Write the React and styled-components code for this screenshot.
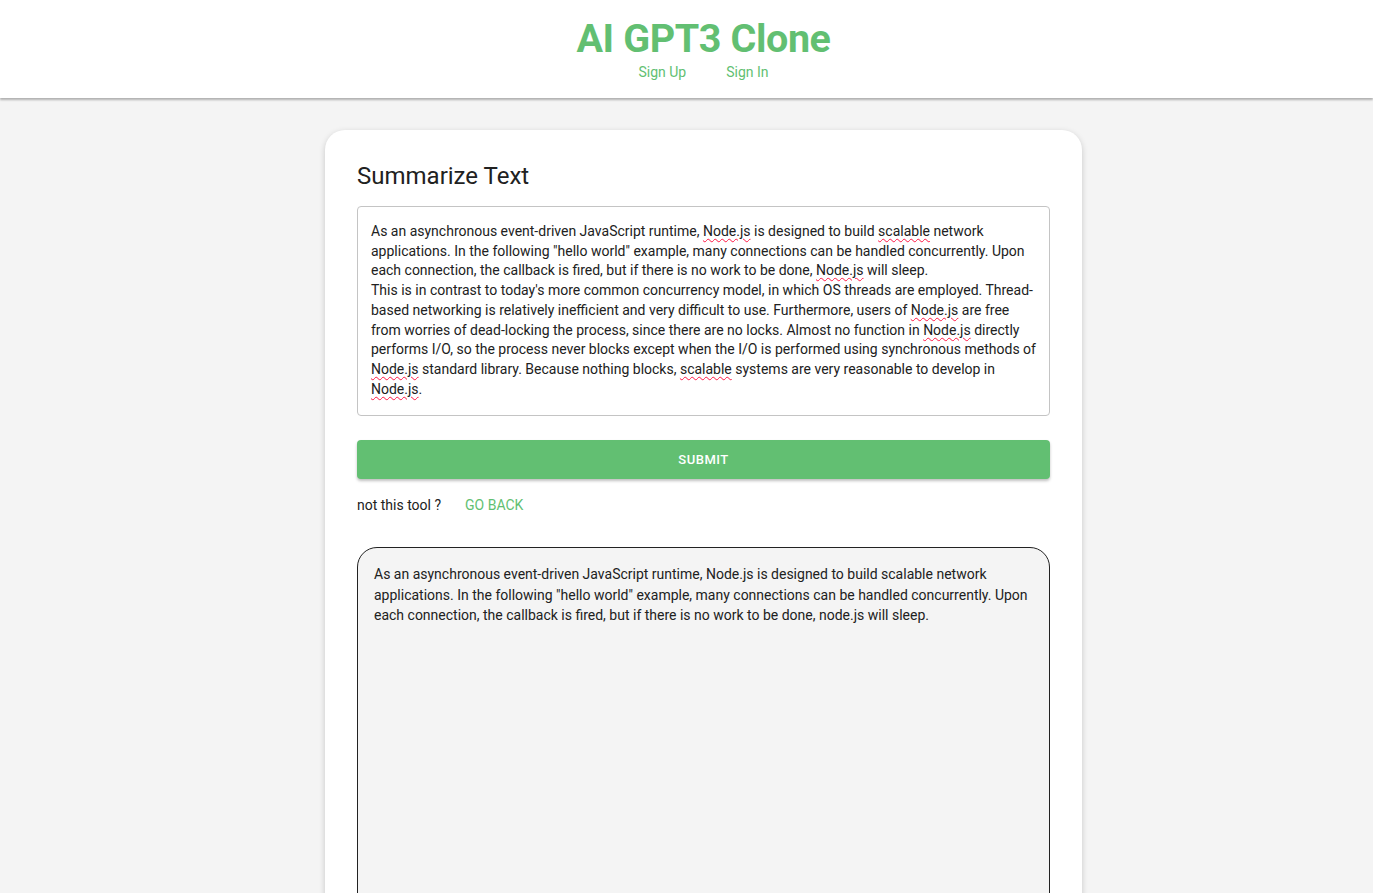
import React, { useState } from "react";
import styled, { createGlobalStyle } from "styled-components";

const GlobalStyle = createGlobalStyle`
  * {
    box-sizing: border-box;
  }
  html, body {
    overflow: hidden;
  }
  body {
    margin: 0;
    background-color: #f4f4f4;
    font-family: Roboto, "Liberation Sans", Arial, sans-serif;
    color: #212121;
  }
`;

const GREEN = "#62bf72";

const Page = styled.div`
  height: 100vh;
  overflow: hidden;
`;

const Header = styled.header`
  background-color: white;
  height: 98px;
  display: flex;
  flex-direction: column;
  align-items: center;
  padding: 15px 0 0 34px;
  box-shadow: 0 2px 2px rgba(0, 0, 0, 0.28);
  position: relative;
`;

const Logo = styled.h1`
  margin: 0;
  font-size: 39.5px;
  font-weight: 700;
  line-height: 48px;
  color: ${GREEN};
  letter-spacing: -0.4px;
`;

const Nav = styled.nav`
  display: flex;
  gap: 40px;
  margin-top: -1px;
`;

const NavLink = styled.a`
  font-size: 14px;
  line-height: 20px;
  color: ${GREEN};
  text-decoration: none;
  cursor: pointer;
`;

const Main = styled.main`
  display: flex;
  justify-content: center;
  padding: 32px 0 0 34px;
`;

const Card = styled.section`
  width: 757px;
  background-color: white;
  border-radius: 20px;
  padding: 28px 32px 40px;
  box-shadow: 0 2px 6px rgba(0, 0, 0, 0.18);
  display: flex;
  flex-direction: column;
`;

const Title = styled.h2`
  margin: 0;
  font-size: 24px;
  font-weight: 400;
  line-height: 36px;
  color: #212121;
`;

const InputBox = styled.div`
  margin-top: 12px;
  border: 1px solid #c4c4c4;
  border-radius: 4px;
  padding: 15px 13px 16px;
  font-size: 14px;
  line-height: 19.7px;
  color: #212121;
  white-space: pre-wrap;
  outline: none;
`;

const Misspelled = styled.span`
  text-decoration: underline wavy #ff1744;
  text-decoration-thickness: 1.3px;
  text-underline-offset: 2px;
`;

const SubmitButton = styled.button`
  margin-top: 24px;
  height: 39px;
  border: none;
  border-radius: 4px;
  background-color: ${GREEN};
  color: white;
  font-family: inherit;
  font-size: 13px;
  font-weight: 500;
  letter-spacing: 0.5px;
  text-transform: uppercase;
  box-shadow: 0 2px 3px rgba(0, 0, 0, 0.25);
  cursor: pointer;
`;

const BackRow = styled.div`
  display: flex;
  align-items: center;
  gap: 24px;
  margin-top: 16px;
  font-size: 14px;
  line-height: 20px;
`;

const BackButton = styled.button`
  border: none;
  background: transparent;
  padding: 0;
  font-family: inherit;
  font-size: 14px;
  color: ${GREEN};
  text-transform: uppercase;
  cursor: pointer;
`;

const Output = styled.div`
  margin-top: 32px;
  min-height: 420px;
  border: 1px solid #222;
  border-radius: 20px;
  background-color: #f4f4f4;
  padding: 16px 16px;
  font-size: 14px;
  line-height: 20.4px;
  color: #212121;
`;

const NODE = () => <Misspelled>Node.js</Misspelled>;

function App() {
  const [summary] = useState(
    'As an asynchronous event-driven JavaScript runtime, Node.js is designed to build scalable network applications. In the following "hello world" example, many connections can be handled concurrently. Upon each connection, the callback is fired, but if there is no work to be done, node.js will sleep.'
  );

  return (
    <Page>
      <GlobalStyle />
      <Header>
        <Logo>AI GPT3 Clone</Logo>
        <Nav>
          <NavLink>Sign Up</NavLink>
          <NavLink>Sign In</NavLink>
        </Nav>
      </Header>
      <Main>
        <Card>
          <Title>Summarize Text</Title>
          <InputBox contentEditable suppressContentEditableWarning spellCheck={false}>
            As an asynchronous event-driven JavaScript runtime, <NODE /> is designed to build{" "}
            <Misspelled>scalable</Misspelled> network applications. In the following "hello world"
            example, many connections can be handled concurrently. Upon each connection, the callback
            is fired, but if there is no work to be done, <NODE /> will sleep.
            {"\n"}This is in contrast to today's more common concurrency model, in which OS threads are
            employed. Thread-based networking is relatively inefficient and very difficult to use.
            Furthermore, users of <NODE /> are free from worries of dead-locking the process, since
            there are no locks. Almost no function in <NODE /> directly performs I/O, so the process
            never blocks except when the I/O is performed using synchronous methods of <NODE /> standard
            library. Because nothing blocks, <Misspelled>scalable</Misspelled> systems are very
            reasonable to develop in <NODE />.
          </InputBox>
          <SubmitButton>Submit</SubmitButton>
          <BackRow>
            <span>not this tool ?</span>
            <BackButton>Go Back</BackButton>
          </BackRow>
          <Output>{summary}</Output>
        </Card>
      </Main>
    </Page>
  );
}

export default App;
